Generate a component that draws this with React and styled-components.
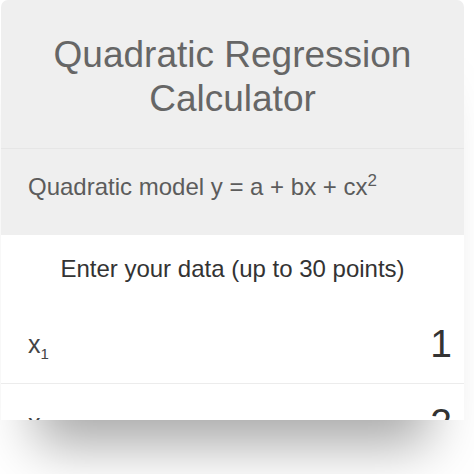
import React from "react";
import styled, { createGlobalStyle } from "styled-components";

const GlobalStyle = createGlobalStyle`
  body {
    margin: 0;
    background: #ffffff;
    font-family: "Liberation Sans", Arial, Helvetica, sans-serif;
  }
`;

const Page = styled.div`
  width: 474px;
  height: 474px;
  overflow: hidden;
  background: #ffffff;
`;

const Card = styled.div`
  width: 463px;
  height: 420px;
  margin-left: 1px;
  overflow: hidden;
  background: #ffffff;
  border-radius: 7px 7px 0 0;
  box-shadow: 0 60px 50px -35px rgba(0, 0, 0, 0.34);
`;

const TitleBlock = styled.header`
  background: #efefef;
  padding: 33px 0 27px;
  border-bottom: 1px solid #e6e6e6;
`;

const Title = styled.h1`
  margin: 0;
  font-size: 37px;
  line-height: 44px;
  font-weight: 400;
  color: #666666;
  text-align: center;
`;

const ModelBlock = styled.div`
  background: #efefef;
  padding: 23px 27px 33px;
  font-size: 24px;
  line-height: 30px;
  color: #5c5c5c;

  sup {
    font-size: 17px;
    line-height: 0;
    vertical-align: 9px;
  }
`;

const DataHeading = styled.h2`
  margin: 0;
  padding: 19px 0 21px;
  font-size: 24px;
  line-height: 30px;
  font-weight: 400;
  color: #333333;
  text-align: center;
`;

const Row = styled.div`
  display: flex;
  align-items: center;
  justify-content: space-between;
  height: 78px;
  padding: 0 12px 0 27px;
  border-bottom: 1px solid #ececec;
`;

const Label = styled.span`
  font-size: 25px;
  color: #444444;

  sub {
    font-size: 15px;
    line-height: 0;
    vertical-align: -6px;
  }
`;

const Value = styled.span`
  font-size: 39px;
  color: #333333;
`;

const points = [1, 2, 3];

export default function App() {
  return (
    <Page>
      <GlobalStyle />
      <Card>
        <TitleBlock>
          <Title>
            Quadratic Regression
            <br />
            Calculator
          </Title>
        </TitleBlock>
        <ModelBlock>
          Quadratic model y = a + bx + cx<sup>2</sup>
        </ModelBlock>
        <DataHeading>Enter your data (up to 30 points)</DataHeading>
        {points.map((p, i) => (
          <Row key={i}>
            <Label>
              x<sub>{i + 1}</sub>
            </Label>
            <Value>{p}</Value>
          </Row>
        ))}
      </Card>
    </Page>
  );
}
